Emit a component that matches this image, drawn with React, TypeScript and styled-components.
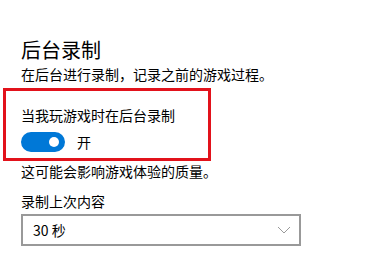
import React, { useState } from 'react';
import styled, { createGlobalStyle } from 'styled-components';

const GlobalStyle = createGlobalStyle`
    html, body {
        margin: 0;
        padding: 0;
        background: #ffffff;
    }
    body {
        font-family: "Noto Sans CJK SC", "Noto Sans", sans-serif;
        color: #000000;
    }
`;

const Page = styled('div')`
    width: 390px;
    height: 276px;
    padding: 36px 0 0 3px;
    box-sizing: border-box;
    overflow: hidden;
`;

const Block = styled('div')`
    padding-left: 18px;
`;

const Title = styled('h2')`
    margin: 0;
    font-size: 20px;
    font-weight: 400;
    line-height: 28px;
`;

const Text = styled('p')<{ $top?: number }>`
    margin: ${(p) => p.$top ?? 0}px 0 0;
    font-size: 14px;
    line-height: 20px;
`;

const Highlight = styled('div')`
    margin-top: 4px;
    width: 208px;
    height: 73px;
    box-sizing: border-box;
    border: 3px solid #e2121b;
    padding: 14px 0 0 15px;
`;

const SwitchRow = styled('label')`
    display: flex;
    align-items: center;
    gap: 12px;
    margin-top: 7px;
    font-size: 14px;
    line-height: 20px;
    cursor: pointer;
`;

const Track = styled('span')<{ $on: boolean }>`
    position: relative;
    width: 44px;
    height: 20px;
    border-radius: 10px;
    box-sizing: border-box;
    background: ${(p) => (p.$on ? '#0078d7' : '#ffffff')};
    border: 2px solid ${(p) => (p.$on ? '#0078d7' : '#333333')};

    &::after {
        content: '';
        position: absolute;
        top: 3px;
        left: ${(p) => (p.$on ? '26px' : '3px')};
        width: 10px;
        height: 10px;
        border-radius: 50%;
        background: ${(p) => (p.$on ? '#ffffff' : '#333333')};
    }
`;

const Select = styled('div')`
    margin-top: 3px;
    width: 280px;
    height: 32px;
    box-sizing: border-box;
    border: 2px solid #999999;
    display: flex;
    align-items: center;
    justify-content: space-between;
    padding: 0 8px 0 10px;
    font-size: 14px;
`;

const Chevron = () => (
    <svg width="14" height="8" viewBox="0 0 14 8">
        <path d="M1 1 L7 7 L13 1" fill="none" stroke="#9a9a9a" strokeWidth="1" />
    </svg>
);

const App = () => {
    const [on, setOn] = useState(true);
    return (
        <>
            <GlobalStyle />
            <Page>
                <Block>
                    <Title>后台录制</Title>
                    <Text>在后台进行录制，记录之前的游戏过程。</Text>
                </Block>
                <Highlight>
                    <Text>当我玩游戏时在后台录制</Text>
                    <SwitchRow onClick={() => setOn(!on)}>
                        <Track $on={on} />
                        {on ? '开' : '关'}
                    </SwitchRow>
                </Highlight>
                <Block>
                    <Text>这可能会影响游戏体验的质量。</Text>
                    <Text $top={10}>录制上次内容</Text>
                    <Select>
                        <span>30 秒</span>
                        <Chevron />
                    </Select>
                </Block>
            </Page>
        </>
    );
};

export default App;
